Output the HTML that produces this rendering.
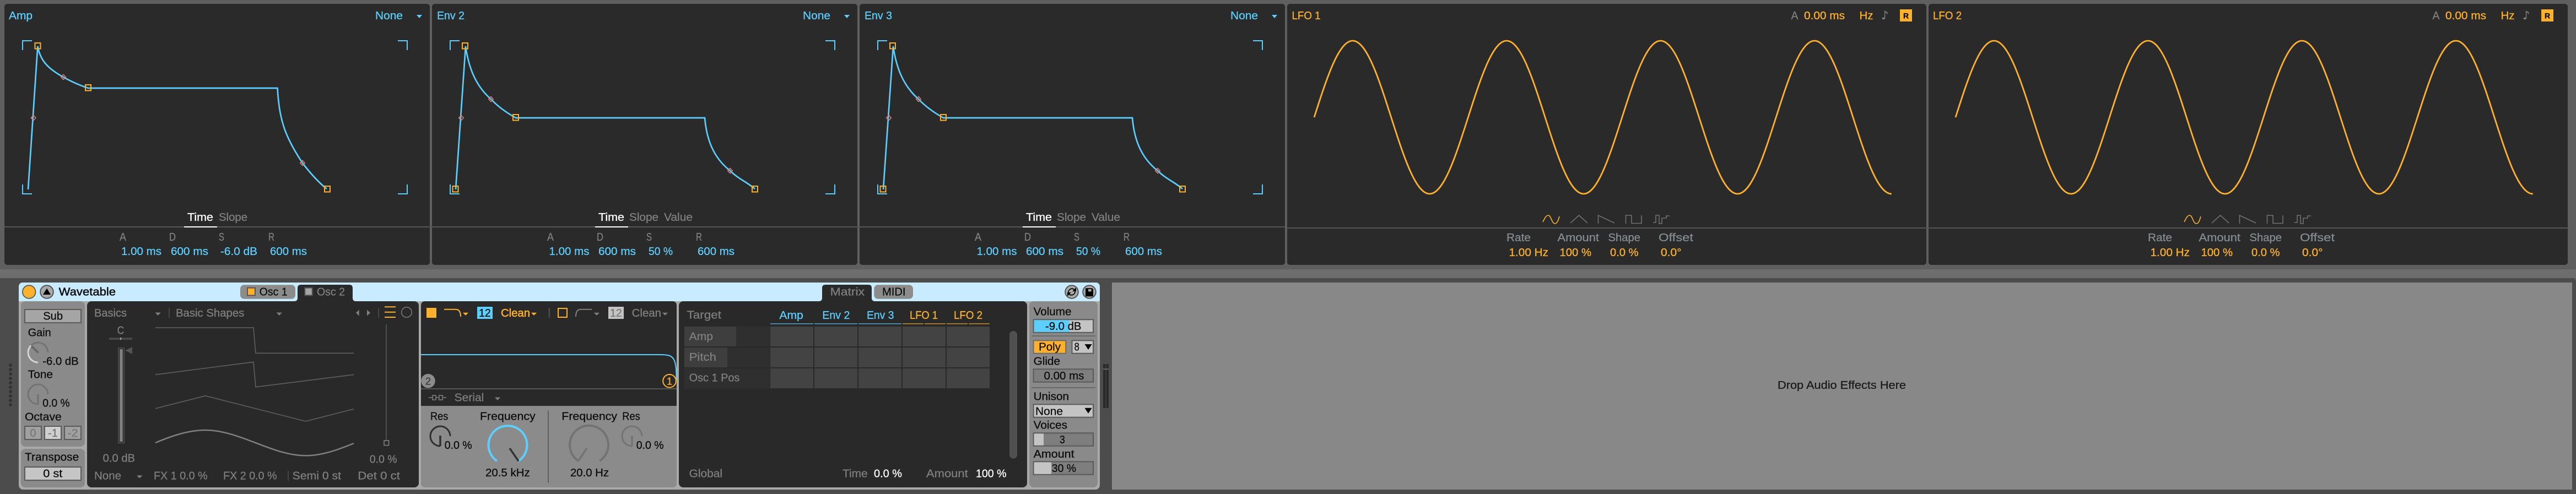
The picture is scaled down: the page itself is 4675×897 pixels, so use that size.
<!DOCTYPE html>
<html><head><meta charset="utf-8"><title>Wavetable</title>
<style>
html,body{margin:0;padding:0;width:4675px;height:897px;overflow:hidden;background:#5f5f5f}
svg{display:block}
text{font-family:"Liberation Sans",sans-serif;font-size:20px;fill:#0c0c0c;stroke:#0c0c0c;stroke-width:.3px}
.b{fill:#5ccfff;stroke:#5ccfff}.o{fill:#ffb12c;stroke:#ffb12c}.g{fill:#7f7f7f;stroke:#7f7f7f}.w{fill:#fff;stroke:#fff}.l{fill:#878b90;stroke:#878b90}
.e{fill:none;stroke:#5ccfff;stroke-width:2.7}
.c{fill:none;stroke:#5ccfff;stroke-width:2}
.h{fill:none;stroke:#ffb12c;stroke-width:2}
.d{fill:none;stroke:#e08078;stroke-width:1.5}
.s{fill:none;stroke:#707070;stroke-width:1.6}
.btn{stroke:#5a5a5a;stroke-width:2}
</style></head><body>
<svg width="4675" height="897" viewBox="0 0 4675 897" xmlns="http://www.w3.org/2000/svg">
<rect width="4675" height="897" fill="#5f5f5f"/>
<rect y="489" width="4675" height="16" fill="#6d6d6d"/>
<path d="M0 505H4667Q4675 505 4675 513V897H0Z" fill="#4c4c4c"/>

<!-- top panels -->
<rect x="8" y="7" width="772" height="474" rx="5" fill="#2a2a2a"/>
<rect x="784" y="7" width="772" height="474" rx="5" fill="#2a2a2a"/>
<rect x="1560" y="7" width="772" height="474" rx="5" fill="#2a2a2a"/>
<rect x="2336" y="7" width="1160" height="474" rx="5" fill="#2a2a2a"/>
<rect x="3500" y="7" width="1160" height="474" rx="5" fill="#2a2a2a"/>
<rect x="8" y="411" width="2324" height="2" fill="#555"/>
<rect x="2336" y="413" width="2324" height="2" fill="#555"/>
<rect x="780" y="411" width="4" height="2" fill="#555"/><rect x="1556" y="411" width="4" height="2" fill="#555"/>

<!-- Amp -->
<text x="16" y="35" textLength="43" lengthAdjust="spacingAndGlyphs" class="b">Amp</text>
<text x="681" y="35" textLength="50" lengthAdjust="spacingAndGlyphs" class="b">None</text>
<path d="M756 27H766L761 33Z" fill="#5ccfff"/>
<g id="marks"><path class="c" d="M58 74H41V91M722 74H739V91M41 335V352H58M739 335V352H722"/></g>
<path class="e" d="M51 344L68.400 84C73 108 84 123 115 140C130 148.500 145 155 160 160H503.500C507 215 515 245 549 296C562 313 578 331 593 343"/>
<rect class="h" x="63.500" y="78" width="10" height="10.500"/><rect class="h" x="155" y="154" width="10" height="10.500"/><rect class="h" x="589" y="338" width="10" height="10.500"/>
<path class="d" d="M60.700 209.400L65 214L60.700 218.600L56.400 214ZM115 135.400L119.300 140L115 144.600L110.700 140ZM549 291.400L553.300 296L549 300.600L544.700 296Z"/>
<text x="340" y="401" textLength="47" lengthAdjust="spacingAndGlyphs" class="w">Time</text>
<text x="397" y="401" textLength="52" lengthAdjust="spacingAndGlyphs" class="g">Slope</text>
<rect x="334" y="411" width="60" height="2" fill="#fff"/>
<text x="217" y="437" textLength="12" lengthAdjust="spacingAndGlyphs" class="g">A</text>
<text x="307" y="437" textLength="12" lengthAdjust="spacingAndGlyphs" class="g">D</text>
<text x="397" y="437" textLength="10" lengthAdjust="spacingAndGlyphs" class="g">S</text>
<text x="487" y="437" textLength="11" lengthAdjust="spacingAndGlyphs" class="g">R</text>
<text x="220" y="463" textLength="73" lengthAdjust="spacingAndGlyphs" class="b">1.00 ms</text>
<text x="310" y="463" textLength="68" lengthAdjust="spacingAndGlyphs" class="b">600 ms</text>
<text x="400" y="463" textLength="67" lengthAdjust="spacingAndGlyphs" class="b">-6.0 dB</text>
<text x="490" y="463" textLength="67" lengthAdjust="spacingAndGlyphs" class="b">600 ms</text>

<!-- Env 2 -->
<text x="793" y="35" textLength="50" lengthAdjust="spacingAndGlyphs" class="b">Env 2</text>
<text x="1457" y="35" textLength="50" lengthAdjust="spacingAndGlyphs" class="b">None</text>
<path d="M1532 27H1542L1537 33Z" fill="#5ccfff"/>
<use href="#marks" x="776"/>
<g id="env">
<path class="e" d="M827 344L845 84C850 120 862 155 891 180C905 195 920 205 936 214H1279C1282 250 1293 285 1325 310C1340 325 1355 330 1370 343"/>
<rect class="h" x="839" y="78" width="10" height="10.500"/><rect class="h" x="821.500" y="338" width="10" height="10.500"/><rect class="h" x="931" y="208" width="10" height="10.500"/><rect class="h" x="1365" y="338" width="10" height="10.500"/>
<path class="d" d="M837 209.400L841.300 214L837 218.600L832.700 214ZM891 175.400L895.300 180L891 184.600L886.700 180ZM1325 305.400L1329.300 310L1325 314.600L1320.700 310Z"/>
<rect x="1080" y="411" width="60" height="2" fill="#fff"/>
</g>
<text x="1086" y="401" textLength="47" lengthAdjust="spacingAndGlyphs" class="w">Time</text>
<text x="1142" y="401" textLength="53" lengthAdjust="spacingAndGlyphs" class="g">Slope</text>
<text x="1205" y="401" textLength="52" lengthAdjust="spacingAndGlyphs" class="g">Value</text>
<text x="993" y="437" textLength="12" lengthAdjust="spacingAndGlyphs" class="g">A</text>
<text x="1083" y="437" textLength="12" lengthAdjust="spacingAndGlyphs" class="g">D</text>
<text x="1173" y="437" textLength="10" lengthAdjust="spacingAndGlyphs" class="g">S</text>
<text x="1263" y="437" textLength="11" lengthAdjust="spacingAndGlyphs" class="g">R</text>
<text x="996.500" y="463" textLength="73" lengthAdjust="spacingAndGlyphs" class="b">1.00 ms</text>
<text x="1086" y="463" textLength="68" lengthAdjust="spacingAndGlyphs" class="b">600 ms</text>
<text x="1177" y="463" textLength="44" lengthAdjust="spacingAndGlyphs" class="b">50 %</text>
<text x="1266" y="463" textLength="67" lengthAdjust="spacingAndGlyphs" class="b">600 ms</text>

<!-- Env 3 -->
<text x="1569" y="35" textLength="50" lengthAdjust="spacingAndGlyphs" class="b">Env 3</text>
<text x="2233" y="35" textLength="50" lengthAdjust="spacingAndGlyphs" class="b">None</text>
<path d="M2308 27H2318L2313 33Z" fill="#5ccfff"/>
<use href="#marks" x="1552"/>
<use href="#env" x="776"/>
<text x="1862" y="401" textLength="47" lengthAdjust="spacingAndGlyphs" class="w">Time</text>
<text x="1918" y="401" textLength="53" lengthAdjust="spacingAndGlyphs" class="g">Slope</text>
<text x="1981" y="401" textLength="52" lengthAdjust="spacingAndGlyphs" class="g">Value</text>
<text x="1769" y="437" textLength="12" lengthAdjust="spacingAndGlyphs" class="g">A</text>
<text x="1859" y="437" textLength="12" lengthAdjust="spacingAndGlyphs" class="g">D</text>
<text x="1949" y="437" textLength="10" lengthAdjust="spacingAndGlyphs" class="g">S</text>
<text x="2039" y="437" textLength="11" lengthAdjust="spacingAndGlyphs" class="g">R</text>
<text x="1772.500" y="463" textLength="73" lengthAdjust="spacingAndGlyphs" class="b">1.00 ms</text>
<text x="1862" y="463" textLength="68" lengthAdjust="spacingAndGlyphs" class="b">600 ms</text>
<text x="1953" y="463" textLength="44" lengthAdjust="spacingAndGlyphs" class="b">50 %</text>
<text x="2042" y="463" textLength="67" lengthAdjust="spacingAndGlyphs" class="b">600 ms</text>

<!-- LFO 1 -->
<g id="lfo">
<path fill="none" stroke="#ffb12c" stroke-width="2.800" d="M2385 213c22.780-71.200 44.570-139 69.850-139c25.280 0 47.070 67.800 69.850 139c22.780 71.200 44.570 139 69.850 139c25.280 0 47.070-67.800 69.850-139c22.780-71.200 44.570-139 69.850-139c25.280 0 47.070 67.800 69.850 139c22.780 71.200 44.570 139 69.850 139c25.280 0 47.070-67.800 69.850-139c22.780-71.200 44.570-139 69.850-139c25.280 0 47.070 67.800 69.850 139c22.780 71.200 44.570 139 69.850 139c25.280 0 47.070-67.800 69.850-139c22.780-71.200 44.570-139 69.850-139c25.280 0 47.070 67.800 69.850 139c22.780 71.200 44.570 139 69.850 139"/>
<rect x="3448" y="17" width="22" height="22" fill="#ffb12c"/>
<path fill="none" stroke="#ffb12c" stroke-width="1.600" d="M2800 403C2804 395 2806 391 2810 391C2815 391 2816 406 2822 406C2826 406 2828 400 2830 393"/>
<path class="s" d="M2850 405L2865.500 391L2881 405M2900.500 406V391L2930 405M2950.500 406V391H2961V405.500H2979V391M3000 404H3005V391H3011V406H3016V396H3024V392H3030"/>
</g>
<text x="2344.500" y="35" textLength="52" lengthAdjust="spacingAndGlyphs" class="o">LFO 1</text>
<text x="3250.500" y="35" textLength="13" lengthAdjust="spacingAndGlyphs" class="g">A</text>
<text x="3274" y="35" textLength="74" lengthAdjust="spacingAndGlyphs" class="o">0.00 ms</text>
<text x="3374.500" y="35" textLength="25" lengthAdjust="spacingAndGlyphs" class="o">Hz</text>
<text x="3414" y="35" style="font-family:'DejaVu Sans',sans-serif;font-size:21px" class="g">♪</text>
<text x="3454" y="33.500" style="font-size:14px;font-weight:bold">R</text>
<text x="2734" y="438" textLength="44" lengthAdjust="spacingAndGlyphs" class="l">Rate</text>
<text x="2826.500" y="438" textLength="75.500" lengthAdjust="spacingAndGlyphs" class="l">Amount</text>
<text x="2918.500" y="438" textLength="58.500" lengthAdjust="spacingAndGlyphs" class="l">Shape</text>
<text x="3010" y="438" textLength="63" lengthAdjust="spacingAndGlyphs" class="l">Offset</text>
<text x="2738.500" y="465" textLength="71.500" lengthAdjust="spacingAndGlyphs" class="o">1.00 Hz</text>
<text x="2830.500" y="465" textLength="57.500" lengthAdjust="spacingAndGlyphs" class="o">100 %</text>
<text x="2922" y="465" textLength="51.500" lengthAdjust="spacingAndGlyphs" class="o">0.0 %</text>
<text x="3014" y="465" textLength="37.500" lengthAdjust="spacingAndGlyphs" class="o">0.0°</text>

<!-- LFO 2 -->
<use href="#lfo" x="1164"/>
<text x="3508" y="35" textLength="52" lengthAdjust="spacingAndGlyphs" class="o">LFO 2</text>
<text x="4414.500" y="35" textLength="13" lengthAdjust="spacingAndGlyphs" class="g">A</text>
<text x="4438" y="35" textLength="74" lengthAdjust="spacingAndGlyphs" class="o">0.00 ms</text>
<text x="4538.500" y="35" textLength="25" lengthAdjust="spacingAndGlyphs" class="o">Hz</text>
<text x="4578" y="35" style="font-family:'DejaVu Sans',sans-serif;font-size:21px" class="g">♪</text>
<text x="4618" y="33.500" style="font-size:14px;font-weight:bold">R</text>
<text x="3898" y="438" textLength="44" lengthAdjust="spacingAndGlyphs" class="l">Rate</text>
<text x="3990.500" y="438" textLength="75.500" lengthAdjust="spacingAndGlyphs" class="l">Amount</text>
<text x="4082.500" y="438" textLength="58.500" lengthAdjust="spacingAndGlyphs" class="l">Shape</text>
<text x="4174" y="438" textLength="63" lengthAdjust="spacingAndGlyphs" class="l">Offset</text>
<text x="3902.500" y="465" textLength="71.500" lengthAdjust="spacingAndGlyphs" class="o">1.00 Hz</text>
<text x="3994.500" y="465" textLength="57.500" lengthAdjust="spacingAndGlyphs" class="o">100 %</text>
<text x="4086" y="465" textLength="51.500" lengthAdjust="spacingAndGlyphs" class="o">0.0 %</text>
<text x="4178" y="465" textLength="37.500" lengthAdjust="spacingAndGlyphs" class="o">0.0°</text>

<!-- rail -->
<g fill="#333"><circle cx="19" cy="663" r="3"/><circle cx="19" cy="671" r="3"/><circle cx="19" cy="679" r="3"/><circle cx="19" cy="687" r="3"/><circle cx="19" cy="695" r="3"/><circle cx="19" cy="703" r="3"/><circle cx="19" cy="711" r="3"/><circle cx="19" cy="719" r="3"/><circle cx="19" cy="727" r="3"/><circle cx="19" cy="735" r="3"/></g>

<!-- device -->
<rect x="34" y="513" width="1962" height="376" rx="8" fill="#a9a9a9"/>
<path d="M34 547V521Q34 513 42 513H1988Q1996 513 1996 521V547Z" fill="#c8ebff"/>
<circle cx="52.700" cy="530" r="11.800" fill="#ffb12c" stroke="#5a5a5a" stroke-width="1.800"/>
<circle cx="85" cy="530" r="11.800" fill="#a9a9a9" stroke="#555" stroke-width="2"/>
<path d="M85 523.500L92 535H78Z" fill="#000"/>
<text x="106.700" y="536.700" textLength="103.300" lengthAdjust="spacingAndGlyphs" style="stroke-width:.5px">Wavetable</text>

<!-- left section -->
<rect x="38" y="547" width="116" height="264" rx="8" fill="#8a8a8a"/>
<rect x="38" y="815" width="116" height="70" rx="8" fill="#8a8a8a"/>
<rect x="45" y="562" width="102" height="24" class="btn" fill="#a5a5a5"/>
<text x="78.300" y="580.700" textLength="35.700" lengthAdjust="spacingAndGlyphs">Sub</text>
<text x="50.700" y="610.700" textLength="42" lengthAdjust="spacingAndGlyphs">Gain</text>
<path d="M69 658A18 18 0 0 1 56.300 627.300" fill="none" stroke="#d4d4d4" stroke-width="3"/>
<path d="M56.300 627.300A18 18 0 0 1 87 640" fill="none" stroke="#737373" stroke-width="3"/>
<path d="M69.500 640.500L57 628.500" stroke="#666" stroke-width="3.500" fill="none"/>
<text x="77.300" y="662.700" textLength="65.400" lengthAdjust="spacingAndGlyphs">-6.0 dB</text>
<text x="50.700" y="686.700" textLength="45.300" lengthAdjust="spacingAndGlyphs">Tone</text>
<path d="M69 734A18 18 0 1 1 87 716" fill="none" stroke="#737373" stroke-width="3"/>
<path d="M69 716V735" stroke="#737373" stroke-width="3.500" fill="none"/>
<text x="77.300" y="738.700" textLength="49.400" lengthAdjust="spacingAndGlyphs">0.0 %</text>
<text x="45" y="763.300" textLength="66.700" lengthAdjust="spacingAndGlyphs">Octave</text>
<rect x="45" y="774" width="30" height="24" class="btn" fill="#a0a0a0"/>
<rect x="81" y="774" width="30" height="24" class="btn" fill="#cfcfcf"/>
<rect x="117" y="774" width="30" height="24" class="btn" fill="#a0a0a0"/>
<text x="54.500" y="793" textLength="11" lengthAdjust="spacingAndGlyphs" style="fill:#777;stroke:#777">0</text>
<text x="87" y="793" textLength="18" lengthAdjust="spacingAndGlyphs" style="fill:#777;stroke:#777">-1</text>
<text x="122.500" y="793" textLength="19" lengthAdjust="spacingAndGlyphs" style="fill:#777;stroke:#777">-2</text>
<text x="45" y="836.700" textLength="98.300" lengthAdjust="spacingAndGlyphs">Transpose</text>
<rect x="45" y="848" width="102" height="24" class="btn" fill="#c5c5c5"/>
<text x="78.300" y="866.700" textLength="35" lengthAdjust="spacingAndGlyphs">0 st</text>

<!-- osc panel -->
<rect x="158" y="547" width="602" height="338" rx="8" fill="#292929"/>
<rect x="436" y="517.300" width="100" height="25.400" rx="7" fill="#8c8c8c"/>
<rect x="449" y="522.700" width="14" height="13.600" fill="#ffb12c" stroke="#555" stroke-width="2"/>
<text x="470.700" y="536.700" textLength="51" lengthAdjust="spacingAndGlyphs">Osc 1</text>
<path d="M534 547Q540 547 540 541V523Q540 517 546 517H634Q640 517 640 523V541Q640 547 646 547Z" fill="#292929"/>
<rect x="553.300" y="522.700" width="13.400" height="13.600" fill="#a5a5a5" stroke="#555" stroke-width="2"/>
<text x="575" y="536.700" textLength="51" lengthAdjust="spacingAndGlyphs" class="g">Osc 2</text>
<text x="171" y="575" textLength="59" lengthAdjust="spacingAndGlyphs" class="g">Basics</text>
<path d="M281.700 567.500H291.700L286.700 573Z" fill="#808080"/>
<path d="M307 559V577M687 559V577M523 855V873" stroke="#505050" stroke-width="1.500"/>
<text x="319" y="575" textLength="124.300" lengthAdjust="spacingAndGlyphs" class="g">Basic Shapes</text>
<path d="M501.700 567.500H511.700L506.700 573Z" fill="#808080"/>
<path d="M651.700 562.500V573.500L646 568ZM666 562.500V573.500L672 568Z" fill="#808080"/>
<path d="M698 557.300H718M698 566.700H718M698 576H718" stroke="#ffb12c" stroke-width="2"/>
<circle cx="738" cy="567" r="9.300" fill="none" stroke="#777" stroke-width="1.600"/>
<text x="212.700" y="606.700" textLength="12.300" lengthAdjust="spacingAndGlyphs" class="g">C</text>
<rect x="198" y="613" width="42" height="4" fill="#484848"/><rect x="218.500" y="613" width="1.300" height="4" fill="#ddd"/>
<rect x="214.800" y="631.800" width="10.500" height="172.500" fill="none" stroke="#505050" stroke-width="1.600"/>
<rect x="217.300" y="634" width="5.400" height="168" fill="#808080"/>
<path d="M240 630V642.700L227.300 636.300Z" fill="#555"/>
<text x="186.700" y="838.300" textLength="58.300" lengthAdjust="spacingAndGlyphs" class="g">0.0 dB</text>
<text x="171" y="870.700" textLength="49" lengthAdjust="spacingAndGlyphs" class="g">None</text>
<path d="M248.300 863.300H258.300L253.300 868.500Z" fill="#808080"/>
<text x="279" y="870.700" textLength="97.700" lengthAdjust="spacingAndGlyphs" class="g">FX 1 0.0 %</text>
<text x="405" y="870.700" textLength="97.700" lengthAdjust="spacingAndGlyphs" class="g">FX 2 0.0 %</text>
<text x="530.700" y="870.700" textLength="88.300" lengthAdjust="spacingAndGlyphs" class="g">Semi 0 st</text>
<text x="649.300" y="870.700" textLength="76.700" lengthAdjust="spacingAndGlyphs" class="g">Det 0 ct</text>
<g fill="none" stroke="#5a5a5a" stroke-width="1.800">
<path d="M282 595H460L464 641.300H642"/>
<path d="M282 680.300L460 657.300L464 702.700L642 680.300"/>
<path d="M282 741.700L372.700 718.700L554.700 765L642 742.700"/>
</g>
<path d="M282 804C310 792 342 781 372.700 781C403 781 432 792 463.700 804C495 816 524 827.300 554.700 827.300C585 827.300 615 816 642 805" fill="none" stroke="#808080" stroke-width="2.500"/>
<path d="M701 589V800" stroke="#555" stroke-width="1.600"/>
<rect x="697" y="800" width="8.600" height="8.600" fill="#292929" stroke="#808080" stroke-width="1.600"/>
<text x="670.700" y="840.700" textLength="50" lengthAdjust="spacingAndGlyphs" class="g">0.0 %</text>

<!-- filter panel -->
<path d="M764 737V555Q764 547 772 547H1220Q1228 547 1228 555V737Z" fill="#292929"/>
<path d="M764 737H1228V877Q1228 885 1220 885H772Q764 885 764 877Z" fill="#8b8b8b"/>
<rect x="774" y="559" width="18" height="18" fill="#ffb12c"/>
<path class="h" d="M806 561.700H827C833 561.700 836 566 836 575"/>
<path d="M840 567.700H850L845 572.800Z" fill="#ffb12c"/>
<rect x="866" y="557" width="28" height="22" fill="#5ccfff"/>
<text x="869" y="575" textLength="21.700" lengthAdjust="spacingAndGlyphs">12</text>
<text x="909" y="575" textLength="53" lengthAdjust="spacingAndGlyphs" class="o" style="stroke-width:.5px">Clean</text>
<path d="M964 567.700H974L969 572.800Z" fill="#ffb12c"/>
<path d="M996.700 559V577" stroke="#555" stroke-width="1.800"/>
<rect x="1013" y="560" width="16" height="16" fill="none" stroke="#ffb12c" stroke-width="2"/>
<path d="M1045 575C1045 566 1048 561.700 1054 561.700H1074" fill="none" stroke="#808080" stroke-width="2"/>
<path d="M1077.700 567.700H1088L1083 572.800Z" fill="#808080"/>
<rect x="1104" y="557" width="28" height="22" fill="#c4c4c4"/>
<text x="1107" y="575" textLength="21.700" lengthAdjust="spacingAndGlyphs" style="fill:#777;stroke:#777">12</text>
<text x="1146.700" y="575" textLength="53.300" lengthAdjust="spacingAndGlyphs" class="g">Clean</text>
<path d="M1202 567.700H1212L1207 572.800Z" fill="#808080"/>
<path class="c" d="M764 644H1198C1212 644 1220 645 1224 655C1227 663 1227.500 672 1227.500 690"/>
<rect x="764" y="705" width="464" height="2" fill="#555"/>
<circle cx="777" cy="691.700" r="12.800" fill="#8c8c8c"/>
<text x="772" y="698.500" style="font-size:18px;fill:#3a3a3a;stroke:#3a3a3a">2</text>
<circle cx="1215" cy="691.700" r="11.800" fill="#292929" stroke="#ffb12c" stroke-width="2"/>
<text x="1210" y="698.500" style="font-size:18px" class="o">1</text>
<path d="M778 721.800H785M791 721.800H796.700M803.300 721.800H810" stroke="#808080" stroke-width="1.500"/>
<rect x="785" y="718" width="6" height="8" fill="none" stroke="#808080" stroke-width="1.500"/>
<rect x="796.700" y="718" width="6.600" height="8" fill="none" stroke="#808080" stroke-width="1.500"/>
<text x="824.700" y="728.300" textLength="53.600" lengthAdjust="spacingAndGlyphs" class="g">Serial</text>
<path d="M898 721.500H908L903 726.700Z" fill="#808080"/>
<text x="781" y="762.700" textLength="32.300" lengthAdjust="spacingAndGlyphs">Res</text>
<text x="871" y="762.700" textLength="100.700" lengthAdjust="spacingAndGlyphs">Frequency</text>
<path d="M799 810A18 18 0 1 1 817 792" fill="none" stroke="#2f2f2f" stroke-width="3"/>
<path d="M799 791V810" stroke="#2f2f2f" stroke-width="3.500"/>
<text x="806.700" y="815" textLength="50" lengthAdjust="spacingAndGlyphs">0.0 %</text>
<path d="M901.800 837A35 35 0 1 1 941.200 837" fill="none" stroke="#5ccfff" stroke-width="4"/>
<path d="M925 814L941 837.300" stroke="#333" stroke-width="3.500"/>
<text x="881" y="865" textLength="80.700" lengthAdjust="spacingAndGlyphs">20.5 kHz</text>
<path d="M995 745.300V876.700" stroke="#5f5f5f" stroke-width="2"/>
<text x="1019.300" y="762.700" textLength="100.700" lengthAdjust="spacingAndGlyphs">Frequency</text>
<text x="1129.300" y="762.700" textLength="32.400" lengthAdjust="spacingAndGlyphs">Res</text>
<path d="M1049.800 837A35 35 0 1 1 1088.200 837" fill="none" stroke="#737373" stroke-width="4"/>
<path d="M1065 814L1049.300 837.300" stroke="#737373" stroke-width="3.500"/>
<text x="1035" y="865" textLength="70" lengthAdjust="spacingAndGlyphs">20.0 Hz</text>
<path d="M1147 810A18 18 0 1 1 1165 792" fill="none" stroke="#737373" stroke-width="3"/>
<path d="M1147 791V810" stroke="#737373" stroke-width="3.500"/>
<text x="1154.700" y="815" textLength="50" lengthAdjust="spacingAndGlyphs">0.0 %</text>

<!-- matrix panel -->
<rect x="1232" y="547" width="632" height="338" rx="8" fill="#292929"/>
<path d="M1486 547Q1492 547 1492 541V523Q1492 517 1498 517H1576Q1582 517 1582 523V541Q1582 547 1588 547Z" fill="#292929"/>
<text x="1506.700" y="536.700" textLength="62.300" lengthAdjust="spacingAndGlyphs" class="g">Matrix</text>
<rect x="1586.300" y="517.300" width="70.700" height="25.400" rx="7" fill="#8c8c8c"/>
<text x="1601" y="536.700" textLength="42.500" lengthAdjust="spacingAndGlyphs">MIDI</text>
<circle cx="1945" cy="530" r="11.800" fill="#a9a9a9" stroke="#555" stroke-width="2"/>
<path d="M1939 531A6.500 6.500 0 0 1 1950 526M1951 529A6.500 6.500 0 0 1 1940 534" fill="none" stroke="#000" stroke-width="1.800"/>
<path d="M1953 522V529H1946ZM1937 538V531H1944Z" fill="#000"/>
<circle cx="1977" cy="530" r="11.800" fill="#a9a9a9" stroke="#555" stroke-width="2"/>
<path d="M1970 523.300H1982L1984 525.300V538.300H1970Z" fill="#000"/>
<rect x="1975" y="525" width="5.700" height="4.300" fill="#a9a9a9"/>
<text x="1246.500" y="578.300" textLength="62.500" lengthAdjust="spacingAndGlyphs" class="g">Target</text>
<text x="1414.400" y="579" textLength="43.400" lengthAdjust="spacingAndGlyphs" class="b">Amp</text>
<text x="1492.400" y="579" textLength="50" lengthAdjust="spacingAndGlyphs" class="b">Env 2</text>
<text x="1573" y="579" textLength="49.500" lengthAdjust="spacingAndGlyphs" class="b">Env 3</text>
<text x="1651" y="579" textLength="51" lengthAdjust="spacingAndGlyphs" class="o">LFO 1</text>
<text x="1731" y="579" textLength="52" lengthAdjust="spacingAndGlyphs" class="o">LFO 2</text>
<g fill="#4d98bc"><rect x="1398" y="587" width="78" height="1.700"/><rect x="1478" y="587" width="78" height="1.700"/><rect x="1558" y="587" width="78" height="1.700"/></g>
<g fill="#b5842f"><rect x="1638" y="587" width="38" height="1.700"/><rect x="1678" y="587" width="38" height="1.700"/><rect x="1718" y="587" width="38" height="1.700"/><rect x="1758" y="587" width="38" height="1.700"/></g>
<g fill="#2f2f2f"><rect x="1242" y="593" width="155" height="36"/><rect x="1242" y="631" width="155" height="36"/><rect x="1242" y="669" width="155" height="36"/></g>
<rect x="1242" y="593" width="94" height="36" fill="#3e3e3e"/><rect x="1242" y="631" width="78" height="36" fill="#3e3e3e"/>
<g fill="#434343">
<rect x="1398" y="593" width="78" height="36"/><rect x="1478" y="593" width="78" height="36"/><rect x="1558" y="593" width="78" height="36"/><rect x="1638" y="593" width="78" height="36"/><rect x="1718" y="593" width="78" height="36"/>
<rect x="1398" y="631" width="78" height="36"/><rect x="1478" y="631" width="78" height="36"/><rect x="1558" y="631" width="78" height="36"/><rect x="1638" y="631" width="78" height="36"/><rect x="1718" y="631" width="78" height="36"/>
<rect x="1398" y="669" width="78" height="36"/><rect x="1478" y="669" width="78" height="36"/><rect x="1558" y="669" width="78" height="36"/><rect x="1638" y="669" width="78" height="36"/><rect x="1718" y="669" width="78" height="36"/>
</g>
<text x="1250.600" y="617.300" textLength="43.400" lengthAdjust="spacingAndGlyphs" class="g">Amp</text>
<text x="1250.600" y="655" textLength="49.400" lengthAdjust="spacingAndGlyphs" class="g">Pitch</text>
<text x="1250.600" y="692.700" textLength="91.800" lengthAdjust="spacingAndGlyphs" class="g">Osc 1 Pos</text>
<rect x="1832" y="601" width="14" height="231.700" rx="7" fill="#505050"/>
<text x="1250.600" y="866.700" textLength="60.400" lengthAdjust="spacingAndGlyphs" class="g">Global</text>
<text x="1529" y="866.700" textLength="45.600" lengthAdjust="spacingAndGlyphs" class="g">Time</text>
<text x="1586" y="866.700" textLength="51" lengthAdjust="spacingAndGlyphs" class="w">0.0 %</text>
<text x="1681" y="866.700" textLength="75.700" lengthAdjust="spacingAndGlyphs" class="g">Amount</text>
<text x="1771" y="866.700" textLength="55.600" lengthAdjust="spacingAndGlyphs" class="w">100 %</text>

<!-- right section -->
<rect x="1868" y="547" width="124" height="338" rx="8" fill="#8a8a8a"/>
<text x="1875.600" y="572.700" textLength="68.900" lengthAdjust="spacingAndGlyphs">Volume</text>
<rect x="1875.600" y="580.300" width="108.400" height="23.400" class="btn" fill="#c4c4c4"/>
<rect x="1876.600" y="581.300" width="63.800" height="21.400" fill="#5ccfff"/>
<text x="1897" y="599" textLength="65.400" lengthAdjust="spacingAndGlyphs">-9.0 dB</text>
<rect x="1872" y="609" width="116" height="2" fill="#6a6a6a"/>
<rect x="1875.600" y="618.300" width="58.700" height="23.400" fill="#ffb12c" stroke="#6a6a6a" stroke-width="2"/>
<text x="1885" y="636.700" textLength="40" lengthAdjust="spacingAndGlyphs">Poly</text>
<rect x="1945.500" y="618.300" width="38.500" height="23.400" class="btn" fill="#c4c4c4"/>
<text x="1949.600" y="636.700" textLength="9.200" lengthAdjust="spacingAndGlyphs">8</text>
<path d="M1968.500 625H1981.700L1975 635Z" fill="#000"/>
<text x="1875.600" y="662.700" textLength="48.400" lengthAdjust="spacingAndGlyphs">Glide</text>
<rect x="1875.600" y="670.300" width="108.400" height="23.400" class="btn" fill="#7e7e7e"/>
<text x="1894.500" y="689" textLength="72.900" lengthAdjust="spacingAndGlyphs">0.00 ms</text>
<rect x="1872" y="703" width="116" height="2" fill="#6a6a6a"/>
<text x="1875.600" y="726.700" textLength="64.400" lengthAdjust="spacingAndGlyphs">Unison</text>
<rect x="1875.600" y="734.300" width="108.400" height="23.400" class="btn" fill="#c4c4c4"/>
<text x="1879" y="753.300" textLength="50" lengthAdjust="spacingAndGlyphs">None</text>
<path d="M1968.500 740.700H1981.700L1975 750.700Z" fill="#000"/>
<text x="1875.600" y="778.700" textLength="61.400" lengthAdjust="spacingAndGlyphs">Voices</text>
<rect x="1875.600" y="786.300" width="108.400" height="23.400" class="btn" fill="#7e7e7e"/>
<rect x="1876.600" y="787.300" width="17.400" height="21.400" fill="#c4c4c4"/>
<text x="1923" y="805" textLength="9.800" lengthAdjust="spacingAndGlyphs">3</text>
<text x="1875.600" y="831" textLength="74" lengthAdjust="spacingAndGlyphs">Amount</text>
<rect x="1875.600" y="838.300" width="108.400" height="23.400" class="btn" fill="#7e7e7e"/>
<rect x="1876.600" y="839.300" width="31.400" height="21.400" fill="#c4c4c4"/>
<text x="1908.800" y="857" textLength="44.200" lengthAdjust="spacingAndGlyphs">30 %</text>

<!-- meter + drop area -->
<rect x="2002" y="661" width="4.500" height="80" fill="#2a2a2a"/><rect x="2007.500" y="661" width="4.500" height="80" fill="#2a2a2a"/>
<rect x="2002" y="669.500" width="10" height="1.500" fill="#777"/>
<rect x="2018" y="513" width="2650" height="376" fill="#888"/>
<text x="3226" y="706" textLength="233" lengthAdjust="spacingAndGlyphs" style="fill:#1a1a1a;stroke:#1a1a1a">Drop Audio Effects Here</text>
</svg>
</body></html>
